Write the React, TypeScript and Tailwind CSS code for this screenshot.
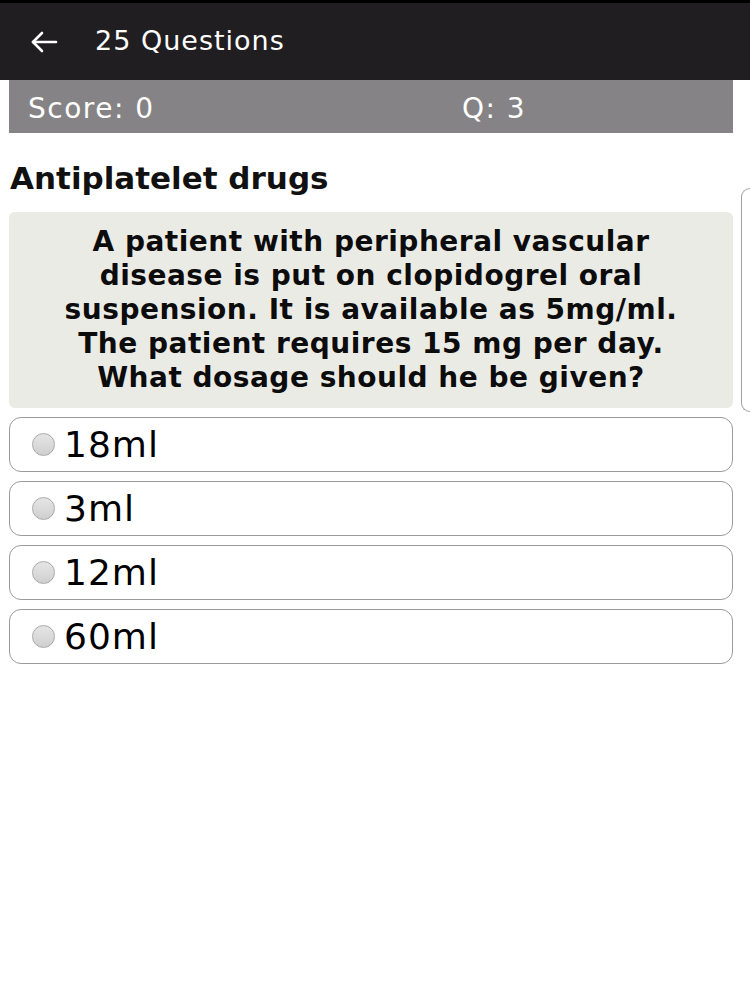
import React from 'react';

const options = ['18ml', '3ml', '12ml', '60ml'];

export default function App() {
  return (
    <div className="w-[750px] h-[1000px] bg-white overflow-hidden" style={{ fontFamily: '"DejaVu Sans", "Liberation Sans", sans-serif' }}>
      {/* Toolbar */}
      <div className="h-[80px] bg-[#201e21] border-t-[3px] border-black flex items-center">
        <svg className="ml-[30px] w-[28px] h-[24px]" viewBox="0 0 28 24" fill="none" stroke="white" strokeWidth="2.6" strokeLinecap="round" strokeLinejoin="round">
          <path d="M26 12H3" />
          <path d="M12 3L3 12l9 9" />
        </svg>
        <span className="ml-[37px] text-white text-[27px] tracking-[1px]">25 Questions</span>
      </div>

      <div className="flex">
        <div className="ml-[9px] w-[724px]">
          {/* Score bar */}
          <div className="h-[53px] bg-[#858385] flex items-center text-white text-[28px] tracking-[1.5px] pt-[4px]">
            <span className="ml-[19px] w-[434px]">Score: 0</span>
            <span>Q: 3</span>
          </div>

          <h1 className="mt-[27px] ml-[1px] h-[40px] text-[31px] font-bold text-[#111] leading-[36px]">Antiplatelet drugs</h1>

          {/* Question */}
          <div className="mt-[12px] h-[196px] bg-[#ebebe6] rounded-[6px] flex items-center justify-center px-[10px]">
            <p className="text-center text-[28px] font-bold tracking-[0.5px] leading-[34px] text-[#0c0c0c]">
              A patient with peripheral vascular<br />
              disease is put on clopidogrel oral<br />
              suspension. It is available as 5mg/ml.<br />
              The patient requires 15 mg per day.<br />
              What dosage should he be given?
            </p>
          </div>

          {/* Options */}
          <div className="mt-[9px] flex flex-col gap-[9px]">
            {options.map((o) => (
              <div key={o} className="h-[55px] border-[1.5px] border-[#9a9a9a] rounded-[12px] flex items-center">
                <span className="ml-[22px] w-[23px] h-[23px] rounded-full border border-[#a8a8a8] bg-gradient-to-b from-[#e6e6e6] to-[#cfcfcf]" />
                <span className="ml-[9px] text-[36px] tracking-[1px] text-black leading-none">{o}</span>
              </div>
            ))}
          </div>
        </div>

        {/* Next card peeking in */}
        <div className="ml-[8px] mt-[108px] h-[224px] flex-1 border-[1.5px] border-r-0 border-[#a0a0a0] rounded-l-[16px]" />
      </div>
    </div>
  );
}
